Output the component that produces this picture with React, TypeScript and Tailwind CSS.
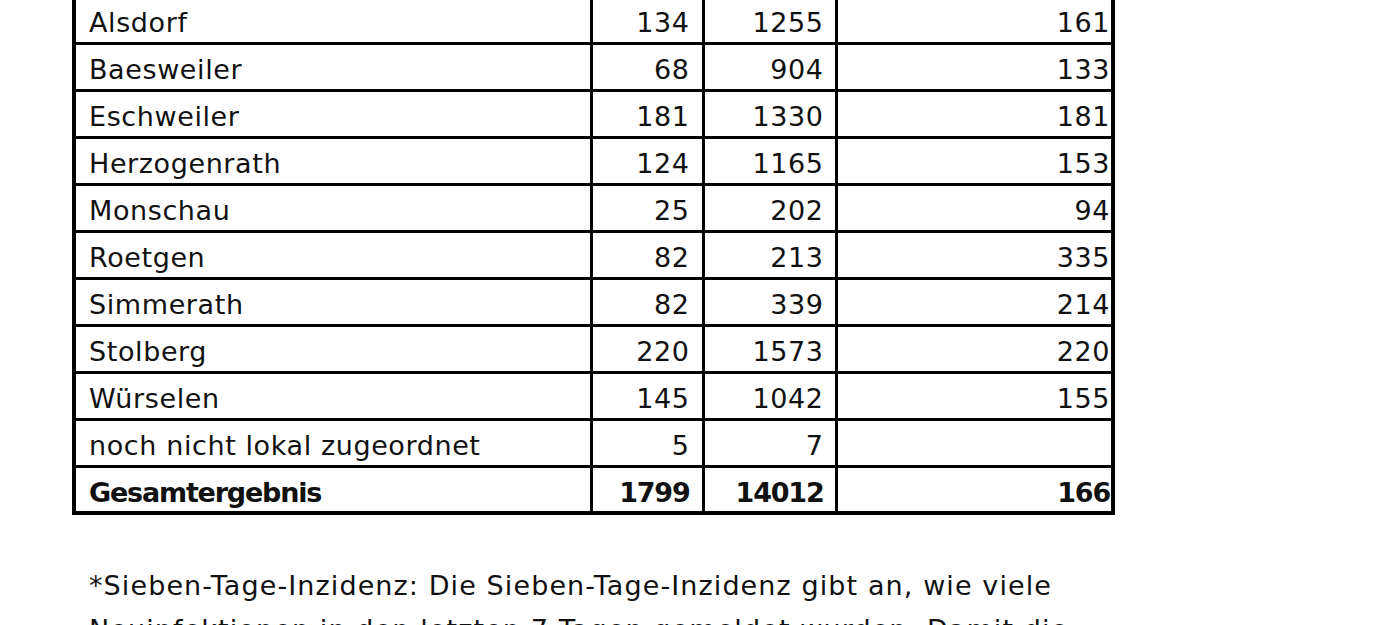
const rows: [string, string, string, string][] = [
  ['Alsdorf', '134', '1255', '161'],
  ['Baesweiler', '68', '904', '133'],
  ['Eschweiler', '181', '1330', '181'],
  ['Herzogenrath', '124', '1165', '153'],
  ['Monschau', '25', '202', '94'],
  ['Roetgen', '82', '213', '335'],
  ['Simmerath', '82', '339', '214'],
  ['Stolberg', '220', '1573', '220'],
  ['Würselen', '145', '1042', '155'],
  ['noch nicht lokal zugeordnet', '5', '7', ''],
]

function Row({ cells, bold }: { cells: [string, string, string, string]; bold?: boolean }) {
  const weight = bold ? 'font-bold tracking-[-1.2px]' : 'tracking-[0.6px]'
  const cell = `border-[3px] border-black pt-[6px] ${weight}`
  return (
    <tr className="h-[47px]">
      <td className={`${cell} pl-[13px] pr-2 text-left`}>{cells[0]}</td>
      <td className={`${cell} pr-[12px] text-right`}>{cells[1]}</td>
      <td className={`${cell} pr-[11px] text-right`}>{cells[2]}</td>
      <td className={`${cell} pr-[1px] text-right`}>{cells[3]}</td>
    </tr>
  )
}

export default function App() {
  return (
    <div
      className="min-h-screen bg-white text-[27px] leading-none text-[#111]"
      style={{ fontFamily: '"DejaVu Sans", Verdana, sans-serif' }}
    >
      <div className="-mt-[6px] pl-[72px]">
        <table className="w-[1039px] table-fixed border-collapse border-[4px] border-black">
          <colgroup>
            <col className="w-[517px]" />
            <col className="w-[112px]" />
            <col className="w-[133px]" />
            <col className="w-[277px]" />
          </colgroup>
          <tbody>
            {rows.map((r) => (
              <Row key={r[0]} cells={r} />
            ))}
            <Row cells={['Gesamtergebnis', '1799', '14012', '166']} bold />
          </tbody>
        </table>
        <p className="mt-[49px] w-[1100px] pl-[17px] text-[27px] leading-[44px] tracking-[1.1px]">
          *Sieben-Tage-Inzidenz: Die Sieben-Tage-Inzidenz gibt an, wie viele
          <br />
          Neuinfektionen in den letzten 7 Tagen gemeldet wurden. Damit die
        </p>
      </div>
    </div>
  )
}
